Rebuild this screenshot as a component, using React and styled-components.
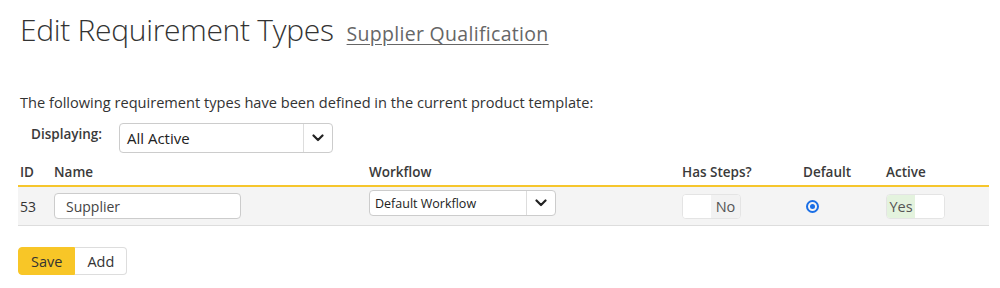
import React from "react";
import styled, { createGlobalStyle } from "styled-components";

const Global = createGlobalStyle`
  html, body { margin: 0; padding: 0; background: #fff; }
  body { font-family: "Open Sans", "Noto Sans", sans-serif; color: #333; font-size: 14px; }
  * { box-sizing: border-box; }
`;

const Page = styled.div`
  padding: 10px 10px 0 18px;
  width: 1000px;
`;

const TitleRow = styled.h1`
  margin: 0 0 0 2px;
  display: flex;
  align-items: baseline;
  gap: 13px;
  font-weight: 300;
  font-family: "Open Sans", sans-serif;
  font-size: 30px;
  line-height: 40px;
  color: #333;
  letter-spacing: -0.3px;
`;

const SubLink = styled.a`
  font-size: 19.5px;
  font-weight: 400;
  color: #666;
  text-decoration: underline;
  text-underline-offset: 3px;
  letter-spacing: 0.3px;
`;

const Intro = styled.p`
  margin: 38px 0 0 2px;
  font-size: 14.6px;
  line-height: 20px;
`;

const FilterRow = styled.div`
  display: flex;
  align-items: center;
  margin: 11px 0 0 13px;
  gap: 17px;
`;

const FilterLabel = styled.span`
  font-size: 13.5px;
  font-weight: 600;
  color: #3a3a3a;
  margin-top: -9px;
`;

const SelectBox = styled.div`
  display: flex;
  align-items: stretch;
  width: ${(p) => p.$w}px;
  height: ${(p) => p.$h}px;
  margin-bottom: ${(p) => p.$mb || 0}px;
  border: 1px solid #ccc;
  border-radius: 4px;
  background: #fff;
  overflow: hidden;
`;

const SelectText = styled.span`
  flex: 1;
  display: flex;
  align-items: center;
  padding-left: ${(p) => p.$pad}px;
  font-size: ${(p) => p.$fs}px;
  color: #222;
`;

const SelectBtn = styled.span`
  width: ${(p) => p.$w}px;
  border-left: 1px solid #ddd;
  display: flex;
  align-items: center;
  justify-content: center;
`;

const Grid = styled.div`
  margin-top: 3px;
  width: 971px;
  display: grid;
  grid-template-columns: 36px 315px 313px 121px 83px 1fr;
`;

const HeadCell = styled.div`
  font-weight: 600;
  font-size: 13.5px;
  color: #3a3a3a;
  padding: 6px 0 3px ${(p) => p.$pl ?? 0}px;
  border-bottom: 2px solid #f6c62c;
  line-height: 20px;
`;

const Cell = styled.div`
  background: #f4f4f4;
  border-bottom: 1px solid #ddd;
  height: 39px;
  display: flex;
  align-items: center;
  padding-left: ${(p) => p.$pl ?? 0}px;
  font-size: 14px;
`;

const TextInput = styled.div`
  width: 187px;
  height: 26px;
  border: 1px solid #ccc;
  border-radius: 4px;
  background: #fff;
  padding-left: 11px;
  display: flex;
  align-items: center;
  font-size: 14px;
  color: #444;
`;

const Toggle = styled.div`
  display: flex;
  width: 59px;
  height: 25px;
  border: 1px solid #e4e4e4;
  border-radius: 4px;
  overflow: hidden;
  background: #fff;
`;

const TogglePart = styled.span`
  width: ${(p) => p.$w}px;
  display: flex;
  align-items: center;
  justify-content: center;
  font-size: 14.5px;
  color: #555;
  background: ${(p) => p.$bg || "#fff"};
`;

const Radio = styled.span`
  width: 13px;
  height: 13px;
  margin-left: 2px;
  border-radius: 50%;
  border: 2px solid #1a6fe6;
  display: flex;
  align-items: center;
  justify-content: center;
  &::after {
    content: "";
    width: 5px;
    height: 5px;
    border-radius: 50%;
    background: #1a6fe6;
  }
`;

const Buttons = styled.div`
  display: flex;
  margin-top: 21px;
`;

const Btn = styled.button`
  height: 28px;
  padding: 0 ${(p) => p.$px}px;
  font-family: "Open Sans", sans-serif;
  font-size: 14.5px;
  color: #333;
  background: ${(p) => (p.$primary ? "#f8c627" : "#fff")};
  border: 1px solid ${(p) => (p.$primary ? "#f8c627" : "#ddd")};
  border-radius: ${(p) => (p.$primary ? "4px 0 0 4px" : "0 4px 4px 0")};
  ${(p) => (p.$primary ? "" : "border-left: none;")}
`;

const Chevron = () => (
  <svg width="12" height="8" viewBox="0 0 12 8">
    <path d="M1.5 1.5 L6 6 L10.5 1.5" fill="none" stroke="#222" strokeWidth="2.2" strokeLinecap="round" strokeLinejoin="round" />
  </svg>
);

export default function App() {
  return (
    <Page>
      <Global />
      <TitleRow>
        Edit Requirement Types <SubLink href="#">Supplier Qualification</SubLink>
      </TitleRow>
      <Intro>The following requirement types have been defined in the current product template:</Intro>
      <FilterRow>
        <FilterLabel>Displaying:</FilterLabel>
        <SelectBox $w={214} $h={30}>
          <SelectText $pad={7} $fs={15}>All Active</SelectText>
          <SelectBtn $w={29}><Chevron /></SelectBtn>
        </SelectBox>
      </FilterRow>
      <Grid>
        <HeadCell $pl={2}>ID</HeadCell>
        <HeadCell>Name</HeadCell>
        <HeadCell>Workflow</HeadCell>
        <HeadCell>Has Steps?</HeadCell>
        <HeadCell>Default</HeadCell>
        <HeadCell>Active</HeadCell>
        <Cell $pl={2}>53</Cell>
        <Cell><TextInput>Supplier</TextInput></Cell>
        <Cell>
          <SelectBox $w={187} $h={26} $mb={6}>
            <SelectText $pad={5} $fs={12.5}>Default Workflow</SelectText>
            <SelectBtn $w={29}><Chevron /></SelectBtn>
          </SelectBox>
        </Cell>
        <Cell>
          <Toggle>
            <TogglePart $w={29} />
            <TogglePart $w={30} $bg="#f2f2f2">No</TogglePart>
          </Toggle>
        </Cell>
        <Cell $pl={1}><Radio /></Cell>
        <Cell>
          <Toggle>
            <TogglePart $w={29} $bg="#e4f3de">Yes</TogglePart>
            <TogglePart $w={30} />
          </Toggle>
        </Cell>
      </Grid>
      <Buttons>
        <Btn $primary $px={12}>Save</Btn>
        <Btn $px={12}>Add</Btn>
      </Buttons>
    </Page>
  );
}
